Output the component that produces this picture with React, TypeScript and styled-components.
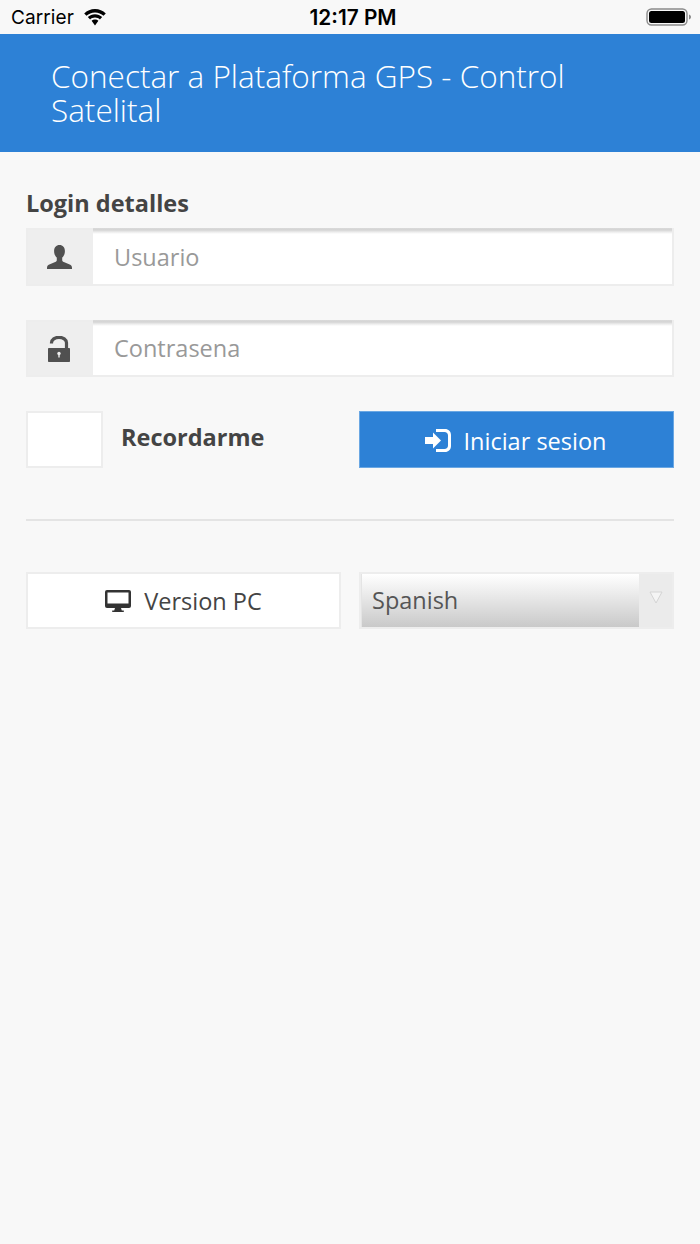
import styled, { createGlobalStyle } from "styled-components";

const GlobalStyle = createGlobalStyle`
  html, body {
    margin: 0;
    padding: 0;
    background-color: #f8f8f8;
  }
  * {
    box-sizing: border-box;
  }
`;

const Page = styled.div`
  width: 700px;
  height: 1244px;
  overflow: hidden;
  background-color: #f8f8f8;
  font-family: "Open Sans", sans-serif;
  color: #444;
`;

const StatusBar = styled.div`
  height: 34px;
  display: grid;
  grid-template-columns: 1fr auto 1fr;
  align-items: center;
  padding: 0 8px 0 11px;
  font-family: Inter, "Liberation Sans", sans-serif;
  color: #000;
`;

const StatusLeft = styled.div`
  display: flex;
  align-items: center;
  gap: 9px;
  font-size: 19px;
  letter-spacing: 0.1px;
`;

const Clock = styled.div`
  font-size: 20.8px;
  font-weight: 600;
  padding-left: 3px;
`;

const StatusRight = styled.div`
  display: flex;
  justify-content: flex-end;
`;

const Header = styled.header`
  height: 118px;
  padding: 25px 100px 0 51px;
  background-color: #2d81d6;
  color: #fff;
  font-size: 31.5px;
  line-height: 33.5px;
  font-weight: 300;
`;

const Content = styled.main`
  padding: 35px 26px 0;
`;

const Heading = styled.h2`
  margin: 0 0 9px;
  font-size: 23.5px;
  line-height: 32px;
  font-weight: 700;
  color: #444;
`;

const InputGroup = styled.div<{ $gap: number; $height: number }>`
  display: flex;
  height: ${(p) => p.$height}px;
  margin-bottom: ${(p) => p.$gap}px;
  border: 2px solid #ededed;
`;

const Addon = styled.div`
  width: 65px;
  display: flex;
  align-items: center;
  justify-content: center;
  padding-right: 3px;
  background-color: #eeeeee;
`;

const Field = styled.div`
  flex: 1;
  display: flex;
  align-items: center;
  padding: 1px 0 0 21px;
  margin-top: -2px;
  background: linear-gradient(#dadada, #d4d4d4 2px, #ececec 4px, #ffffff 6px);
  font-size: 23.5px;
  color: #999;
`;

const ActionRow = styled.div`
  display: grid;
  grid-template-columns: 1fr 1fr;
  column-gap: 18px;
`;

const RememberRow = styled.div`
  display: flex;
  align-items: flex-start;
`;

const Checkbox = styled.div`
  width: 77px;
  height: 57px;
  background-color: #fff;
  border: 2px solid #ededed;
`;

const RememberLabel = styled.span`
  margin: 10px 0 0 18px;
  font-size: 23.5px;
  line-height: 32px;
  font-weight: 700;
  color: #444;
`;

const PrimaryButton = styled.div`
  height: 57px;
  display: flex;
  align-items: center;
  justify-content: center;
  gap: 13px;
  padding: 2px 2px 0 0;
  background-color: #2d81d6;
  border: 1px solid #6aa7e3;
  color: #fff;
  font-size: 23.5px;
`;

const Divider = styled.hr`
  height: 2px;
  margin: 51px 0 51px;
  border: none;
  background-color: #e4e4e4;
`;

const SecondaryButton = styled.div`
  height: 57px;
  display: flex;
  align-items: center;
  justify-content: center;
  gap: 13px;
  background-color: #fff;
  border: 2px solid #ededed;
  color: #444;
  font-size: 23.5px;
`;

const Select = styled.div`
  height: 57px;
  display: flex;
  border: 2px solid #ededed;
  background-color: #ebebeb;
`;

const SelectValue = styled.div`
  flex: 1;
  display: flex;
  align-items: center;
  padding: 0 0 2px 10px;
  border-left: 1px solid #e4e4e4;
  background: linear-gradient(#ffffff, #efefef 30%, #c9c9c9);
  color: #555;
  font-size: 23.5px;
`;

const SelectArrow = styled.div`
  width: 33px;
  display: flex;
  justify-content: center;
  padding: 17px 0 0 0;
`;

const WifiIcon = () => (
  <svg width="24" height="17" viewBox="0 0 24 17">
    <path d="M12 3.400c3.300 0 6.300 1.300 8.500 3.400L22.800 4.400C20 1.700 16.200 0 12 0S4 1.700 1.200 4.400l2.300 2.400C5.700 4.700 8.700 3.400 12 3.400z" />
    <path d="M12 8.600c1.900 0 3.600.7 4.900 1.900l2.300-2.400C17.300 6.300 14.800 5.200 12 5.200S6.700 6.300 4.800 8.100l2.300 2.400C8.400 9.300 10.100 8.600 12 8.600z" />
    <path d="M12 10.400c-1.300 0-2.500.5-3.400 1.400L12 16.600l3.400-4.800c-.9-.9-2.100-1.400-3.400-1.400z" />
  </svg>
);

const BatteryIcon = () => (
  <svg width="46" height="20" viewBox="0 0 46 20">
    <rect x="1" y="2" width="40" height="16" rx="4.500" fill="none" stroke="#8a8a8a" strokeWidth="1.400" />
    <rect x="3" y="4" width="36" height="12" rx="2.500" fill="#000" />
    <path d="M43 7.500c1.300.4 2 1.300 2 2.500s-.7 2.100-2 2.500z" fill="#8a8a8a" />
  </svg>
);

const UserIcon = () => (
  <svg width="25" height="24" viewBox="0 0 25 24" fill="#505050">
    <path d="M12.500 0c3.300 0 5.400 2.500 5.400 6 0 2.800-1.100 5.300-2.700 6.600v2.500c0 1 .6 1.600 1.600 2l5.900 2.400c1.500.6 2.300 1.900 2.300 3.500v1H0v-1c0-1.600.8-2.900 2.300-3.500L8.200 17c1-.4 1.600-1 1.600-2v-2.400C8.200 11.300 7.100 8.800 7.100 6c0-3.500 2.100-6 5.400-6z" />
  </svg>
);

const LockIcon = () => (
  <svg width="22" height="26" viewBox="0 0 22 26">
    <path d="M3.500 7.500V6.800A7.200 5.300 0 0 1 18.500 6.800V12" fill="none" stroke="#505050" strokeWidth="3.200" />
    <rect x="0" y="12" width="22" height="14" rx="0.800" fill="#505050" />
    <circle cx="11" cy="17.500" r="1.700" fill="#eee" />
    <rect x="10.300" y="18" width="1.400" height="3.500" fill="#eee" />
  </svg>
);

const LoginIcon = () => (
  <svg width="26" height="23" viewBox="0 0 26 23" fill="#fff">
    <path d="M11 0h9c3.500 0 6 2.500 6 6v11c0 3.500-2.500 6-6 6h-9v-3h8.500c2 0 3.500-1.500 3.500-3.500v-10C23 4.500 21.500 3 19.500 3H11z" />
    <path d="M0 8h8V3.500l8 8-8 8V15H0z" />
  </svg>
);

const MonitorIcon = () => (
  <svg width="26" height="22" viewBox="0 0 26 22">
    <path d="M2 0h22a2 2 0 0 1 2 2v14a2 2 0 0 1-2 2H2a2 2 0 0 1-2-2V2a2 2 0 0 1 2-2z" fill="#333" />
    <rect x="2.500" y="2.500" width="21" height="11" fill="#fff" />
    <path d="M10 18h6l.8 2.500h2V22H7.200v-1.500h2z" fill="#333" />
  </svg>
);

const ChevronIcon = () => (
  <svg width="14" height="13" viewBox="0 0 14 13">
    <path d="M1 1h12L7 12z" fill="#f4f4f4" stroke="#d4d4d4" strokeWidth="1" />
  </svg>
);

export default function App() {
  return (
    <Page>
      <GlobalStyle />
      <StatusBar>
        <StatusLeft>
          Carrier
          <WifiIcon />
        </StatusLeft>
        <Clock>12:17 PM</Clock>
        <StatusRight>
          <BatteryIcon />
        </StatusRight>
      </StatusBar>
      <Header>Conectar a Plataforma GPS - Control Satelital</Header>
      <Content>
        <Heading>Login detalles</Heading>
        <InputGroup $gap={34} $height={58}>
          <Addon>
            <UserIcon />
          </Addon>
          <Field>Usuario</Field>
        </InputGroup>
        <InputGroup $gap={34} $height={57}>
          <Addon>
            <LockIcon />
          </Addon>
          <Field>Contrasena</Field>
        </InputGroup>
        <ActionRow>
          <RememberRow>
            <Checkbox />
            <RememberLabel>Recordarme</RememberLabel>
          </RememberRow>
          <PrimaryButton>
            <LoginIcon />
            Iniciar sesion
          </PrimaryButton>
        </ActionRow>
        <Divider />
        <ActionRow>
          <SecondaryButton>
            <MonitorIcon />
            Version PC
          </SecondaryButton>
          <Select>
            <SelectValue>Spanish</SelectValue>
            <SelectArrow>
              <ChevronIcon />
            </SelectArrow>
          </Select>
        </ActionRow>
      </Content>
    </Page>
  );
}
